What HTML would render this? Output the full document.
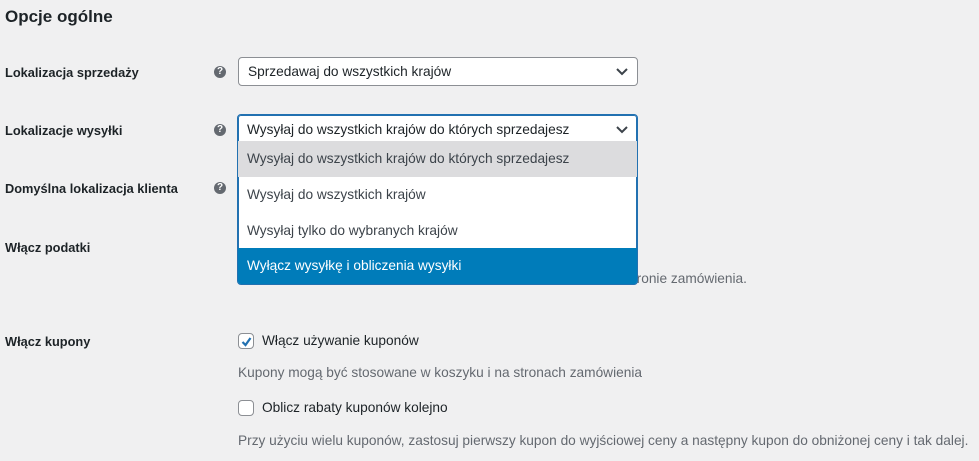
<!DOCTYPE html>
<html><head><meta charset="utf-8"><style>
body{margin:0;width:979px;height:461px;background:#f0f0f1;font-family:"Liberation Sans",sans-serif;color:#1d2327;position:relative;overflow:hidden;font-size:13.7px}
.a{position:absolute;white-space:nowrap}
.lab{font-weight:bold;font-size:12.8px}
.h{left:214px;width:12px;height:12px;border-radius:50%;background:#646970;color:#fff;font-size:10px;font-weight:bold;text-align:center;line-height:12px}
.sel{background:#fff;border:1px solid #8c8f94;border-radius:4px;box-sizing:border-box}
.desc{color:#646970}
.opt{position:absolute;left:0;right:0;height:36px;line-height:36px;padding-left:9px;color:#3c434a}
.cb{width:16px;height:16px;border:1px solid #8c8f94;border-radius:4px;background:#fff;box-sizing:border-box}
</style></head><body>
<div class="a" style="left:5px;top:7px;font-size:17px;font-weight:bold">Opcje ogólne</div>

<div class="a lab" style="left:5px;top:65px">Lokalizacja sprzedaży</div>
<div class="a h" style="top:66px">?</div>
<div class="a sel" style="left:238px;top:57px;width:400px;height:29px"><span class="a" style="left:9px;top:6px">Sprzedawaj do wszystkich krajów</span>
<svg class="a" style="right:9px;top:9px" width="12" height="10"><path d="M1 2l5 5 5-5" stroke="#3c434a" stroke-width="2" fill="none"/></svg></div>

<div class="a lab" style="left:5px;top:123px">Lokalizacje wysyłki</div>
<div class="a h" style="top:124px">?</div>
<div class="a lab" style="left:5px;top:181px">Domyślna lokalizacja klienta</div>
<div class="a h" style="top:182px">?</div>
<div class="a lab" style="left:5px;top:240px">Włącz podatki</div>
<div class="a desc" style="left:626px;top:271px">stronie zamówienia.</div>

<div class="a" style="left:237px;top:114px;width:401px;height:171px;background:#fff;border:1px solid #2271b1;border-radius:4px;box-sizing:border-box;box-shadow:0 0 0 1px #2271b1 inset;overflow:hidden">
<span class="a" style="left:9px;top:7px">Wysyłaj do wszystkich krajów do których sprzedajesz</span>
<svg class="a" style="right:9px;top:10px" width="12" height="10"><path d="M1 2l5 5 5-5" stroke="#3c434a" stroke-width="2" fill="none"/></svg>
<div class="opt" style="top:26px;background:#dcdcde">Wysyłaj do wszystkich krajów do których sprzedajesz</div>
<div class="opt" style="top:62px">Wysyłaj do wszystkich krajów</div>
<div class="opt" style="top:98px">Wysyłaj tylko do wybranych krajów</div>
<div class="opt" style="top:133px;background:#007cba;color:#fff">Wyłącz wysyłkę i obliczenia wysyłki</div>
</div>

<div class="a lab" style="left:5px;top:334px">Włącz kupony</div>
<div class="a cb" style="left:238px;top:333px"><svg class="a" style="left:1px;top:1px" width="13" height="13"><path d="M2.5 7l3 3 5-7" stroke="#2271b1" stroke-width="2.2" fill="none"/></svg></div>
<div class="a" style="left:262px;top:333px">Włącz używanie kuponów</div>
<div class="a desc" style="left:238px;top:365px">Kupony mogą być stosowane w koszyku i na stronach zamówienia</div>
<div class="a cb" style="left:238px;top:400px"></div>
<div class="a" style="left:262px;top:400px">Oblicz rabaty kuponów kolejno</div>
<div class="a desc" style="left:238px;top:433px">Przy użyciu wielu kuponów, zastosuj pierwszy kupon do wyjściowej ceny a następny kupon do obniżonej ceny i tak dalej.</div>
</body></html>
